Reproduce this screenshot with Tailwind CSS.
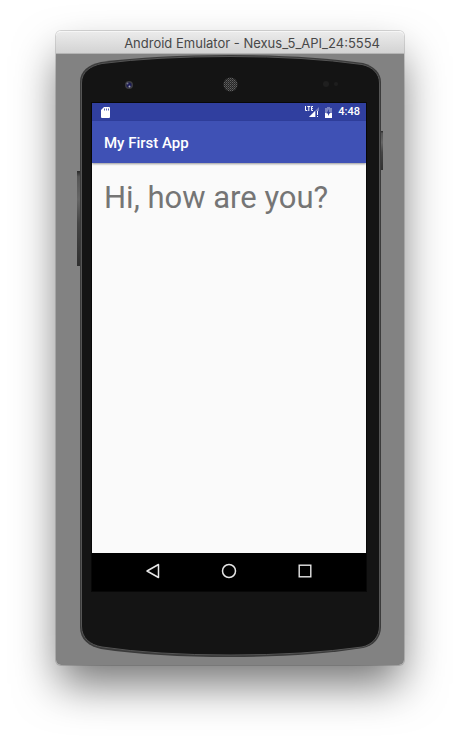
<!DOCTYPE html>
<html lang="en">
<head>
<meta charset="utf-8">
<meta name="viewport" content="width=device-width, initial-scale=1">
<title>Android Emulator - Nexus_5_API_24:5554</title>
<script src="https://cdn.jsdelivr.net/npm/@tailwindcss/browser@4"></script>
</head>
<body class="min-h-screen flex flex-col bg-white px-14 pt-[31px] pb-20 overflow-hidden">
<div class="flex grow flex-col rounded-[5px] ring-1 ring-black/15 shadow-[0_22px_44px_-3px_rgba(0,0,0,0.55)]">
  <header class="flex h-[23px] shrink-0 items-center justify-end rounded-t-[5px] border-t border-b border-t-[#f6f6f6] border-b-[#b4b4b4] bg-linear-to-b from-[#ebebeb] to-[#d3d3d3] pr-6">
    <h1 class="whitespace-nowrap font-['Inter','Liberation_Sans',sans-serif] text-[13px] leading-5 text-[#484848]">Android Emulator - Nexus_5_API_24:5554</h1>
  </header>

  <main class="relative flex grow flex-col rounded-b-[5px] bg-[#828282] pt-[49px] pr-[38px] pb-[74px] pl-9">
    <!-- Phone hardware -->
    <svg class="absolute inset-0 h-full w-full" viewBox="0 0 348 611" preserveAspectRatio="none" aria-hidden="true">
      <defs>
        <linearGradient id="key" x1="0" y1="0" x2="0" y2="1">
          <stop offset="0" stop-color="#292929"/><stop offset=".06" stop-color="#555"/><stop offset=".3" stop-color="#656565"/><stop offset=".55" stop-color="#444"/><stop offset="1" stop-color="#303030"/>
        </linearGradient>
        <pattern id="mesh" width="2" height="2" patternUnits="userSpaceOnUse">
          <rect width="2" height="2" fill="#262626"/><rect width="1" height="1" fill="#626262"/><rect x="1" y="1" width="1" height="1" fill="#484848"/>
        </pattern>
      </defs>
      <rect x="21" y="117" width="4" height="95" fill="url(#key)"/>
      <rect x="324" y="77" width="3" height="39" fill="url(#key)"/>
      <path d="M24 28C24 17 32 11 45 8Q100 1 174 1Q250 1 307 9C318 12 325 19 325 28V573C325 584 317 592 307 594Q250 603 174 603Q100 603 45 595C33 592 24 586 24 573Z" fill="#3b3b3b"/>
      <path d="M25.500 29C25.500 18 34 12 46 9.500Q100 2.500 174 2.500Q250 2.500 306 10.500C317 13 323.500 20 323.500 29V572C323.500 583 316 591 306 593Q250 601 174 601Q100 601 46 593C34 591 25.500 584 25.500 572Z" fill="#141414" stroke="#555" stroke-width="1"/>
      <circle cx="73" cy="31" r="4" fill="#3c3c42"/>
      <circle cx="73" cy="31" r="2.500" fill="#1b1b55"/>
      <circle cx="73.500" cy="32.500" r="1" fill="#a9a9b8"/>
      <circle cx="71.500" cy="29.500" r="1" fill="#77778a"/>
      <circle cx="174.500" cy="30.500" r="7" fill="url(#mesh)"/>
      <circle cx="270" cy="30" r="3" fill="#1f1f1f"/>
      <circle cx="280" cy="30" r="2" fill="#1e1e1e"/>
    </svg>

    <!-- Device screen -->
    <section class="relative flex grow flex-col bg-[#fafafa] font-['Roboto','Liberation_Sans',sans-serif] outline-1 outline-black/60">
      <div class="flex h-[18px] shrink-0 items-center bg-[#303f9f] pl-[9px] pr-[6px]">
        <svg class="h-[11px] w-[9px]" viewBox="0 0 9 11" aria-label="SD card">
          <path d="M3 0H8Q9 0 9 1V10Q9 11 8 11H1Q0 11 0 10V3Z" fill="#fff"/>
          <path d="M3.500 1.500V3.500M5.500 1.500V3.500M7.500 1.500V3.500" stroke="#303f9f" stroke-width=".8"/>
        </svg>
        <div class="ml-auto flex items-center gap-[6px]">
          <svg class="h-[12px] w-[14px]" viewBox="0 0 14 12" aria-label="LTE signal">
            <path d="M.5 0V4.500H2.300M2.300 .500H5.300M3.800 .500V5M8 .500H6.500V4.500H8M6.500 2.500H7.800" fill="none" stroke="#fff" stroke-width="1"/>
            <path d="M14 1V5H11V11H4Z" fill="#7781c0"/>
            <path d="M10 5V11H4Z" fill="#fff"/>
            <path d="M12.500 5V9M12.500 10V11" stroke="#fff" stroke-width="1"/>
          </svg>
          <svg class="h-[11px] w-[7px]" viewBox="0 0 7 11" aria-label="Battery charging">
            <path d="M2 0H5V1H7V6H0V1H2Z" fill="#7983c1"/>
            <path d="M0 6H7V11H0Z" fill="#fff"/>
            <path d="M4 2V5H5.500L3 9V6.500H1.500Z" fill="#303f9f"/>
          </svg>
          <span class="text-[11px] font-medium leading-5 text-white">4:48</span>
        </div>
      </div>
      <div class="relative flex h-[42px] shrink-0 items-center bg-[#3f51b5] px-3 pt-0.5 shadow-[0_1px_2px_rgba(0,0,0,0.4)]">
        <h2 class="text-[15px] font-medium leading-5 text-white">My First App</h2>
      </div>
      <div class="grow px-3 pt-[17px]">
        <p class="whitespace-nowrap text-[31px] leading-9 text-[#757575]">Hi, how are you?</p>
      </div>
      <nav class="flex h-[38px] shrink-0 items-center justify-center gap-[52px] bg-black pb-0.5" aria-label="System">
        <button type="button" class="flex size-6 items-center justify-center" aria-label="Back">
          <svg class="size-4" viewBox="0 0 16 16" fill="none" stroke="#e6e6e6" stroke-width="1.500" stroke-linejoin="round"><path d="M13.500 1.500V14.500L2 8Z"/></svg>
        </button>
        <button type="button" class="flex size-6 items-center justify-center" aria-label="Home">
          <svg class="size-4" viewBox="0 0 16 16" fill="none" stroke="#e6e6e6" stroke-width="1.500"><circle cx="8" cy="8" r="6.500"/></svg>
        </button>
        <button type="button" class="flex size-6 items-center justify-center" aria-label="Overview">
          <svg class="size-4" viewBox="0 0 16 16" fill="none" stroke="#e6e6e6" stroke-width="1.400"><rect x="2.200" y="2.200" width="11.600" height="11.600"/></svg>
        </button>
      </nav>
    </section>
  </main>
</div>
</body>
</html>
